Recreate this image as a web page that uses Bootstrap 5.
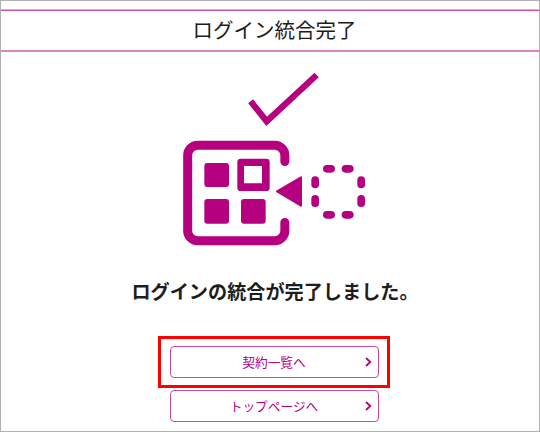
<!DOCTYPE html>
<html lang="ja">
<head>
<meta charset="utf-8">
<meta name="viewport" content="width=device-width, initial-scale=1">
<title>ログイン統合完了</title>
<link href="https://cdn.jsdelivr.net/npm/bootstrap@5.3.0/dist/css/bootstrap.min.css" rel="stylesheet">
<style>
:root { --brand: #b5007f; }
body { font-family: "Noto Sans CJK JP", sans-serif; color: #1d1d1d; }
.screen { width: 540px; height: 432px; border: 1px solid #b0b0b0; padding-top: 8px; }
.title-bar { height: 43px; border-top: 1px solid #e9a5d1; border-bottom: 2px solid #df84c2; box-shadow: inset 0 1px #d152a5; padding-left: 9px; }
.title-bar h1 { font-size: 20.5px; line-height: 39px; font-weight: 400; }
.hero { height: 200px; margin-top: 8px; margin-left: 9px; }
.message { font-size: 19.15px; line-height: 30px; font-weight: 700; margin-top: 16px; padding-left: 10px; }
.focus-frame { width: 232px; height: 52px; margin-top: 30px; margin-left: 8px; border: 3px solid #fe0000; }
.btn-brand { width: 209px; height: 32px; padding: 0 6px; font-size: 12.7px; line-height: 30px;
  color: var(--brand); border: 1px solid #cb4ba3; border-radius: 4px; background: #fff; }
.btn-brand:hover { color: var(--brand); border-color: var(--brand); }
.btn-second { margin-top: 2px; margin-left: 8px; }
</style>
</head>
<body>
<main class="screen d-flex flex-column overflow-hidden bg-white">
  <header class="title-bar text-center flex-shrink-0"><h1 class="m-0">ログイン統合完了</h1></header>
  <div class="hero d-flex justify-content-center flex-shrink-0">
    <svg width="210" height="200" viewBox="0 0 630 600" fill="#b5007f" aria-hidden="true">
      <path d="M242 124L290 184L440 45" fill="none" stroke="#b5007f" stroke-width="19"/>
      <path d="M344.500 304.500V286A30 30 0 0 0 314.500 256H83A30 30 0 0 0 53 286V512A30 30 0 0 0 83 542H314.500A30 30 0 0 0 344.500 512V487.500" fill="none" stroke="#b5007f" stroke-width="27" stroke-linecap="round"/>
      <rect x="103" y="309" width="74" height="72" rx="9"/>
      <rect x="103" y="417" width="74" height="74" rx="9"/>
      <rect x="213" y="417" width="74" height="74" rx="9"/>
      <path fill-rule="evenodd" d="M212 296H289Q299 296 299 306V383Q299 393 289 393H212Q202 393 202 383V306Q202 296 212 296ZM222 318V370H276V318Z"/>
      <path d="M321 394L393 352V437Z" stroke="#b5007f" stroke-width="6" stroke-linejoin="round"/>
      <g>
        <rect x="459" y="315" width="36" height="23" rx="11.500"/><rect x="515" y="315" width="36" height="23" rx="11.500"/>
        <rect x="459" y="453" width="36" height="23" rx="11.500"/><rect x="515" y="453" width="36" height="23" rx="11.500"/>
        <rect x="424" y="349" width="23" height="36" rx="11.500"/><rect x="424" y="405" width="23" height="36" rx="11.500"/>
        <rect x="562" y="349" width="23" height="36" rx="11.500"/><rect x="562" y="405" width="23" height="36" rx="11.500"/>
      </g>
    </svg>
  </div>
  <p class="message text-center mb-0 flex-shrink-0">ログインの統合が完了しました。</p>
  <div class="d-flex flex-column align-items-center">
    <div class="focus-frame d-flex align-items-center justify-content-center">
      <a class="btn btn-brand d-flex align-items-center" href="#"><span class="flex-grow-1 ps-2">契約一覧へ</span>
        <svg width="8" height="10" viewBox="0 0 8 10" fill="none" stroke="#b5007f" stroke-width="1.800"><path d="M2 1L6.300 5L2 9"/></svg></a>
    </div>
    <a class="btn btn-brand btn-second d-flex align-items-center" href="#"><span class="flex-grow-1 ps-2">トップページへ</span>
      <svg width="8" height="10" viewBox="0 0 8 10" fill="none" stroke="#b5007f" stroke-width="1.800"><path d="M2 1L6.300 5L2 9"/></svg></a>
  </div>
</main>
<script src="https://cdn.jsdelivr.net/npm/bootstrap@5.3.0/dist/js/bootstrap.bundle.min.js"></script>
</body>
</html>
